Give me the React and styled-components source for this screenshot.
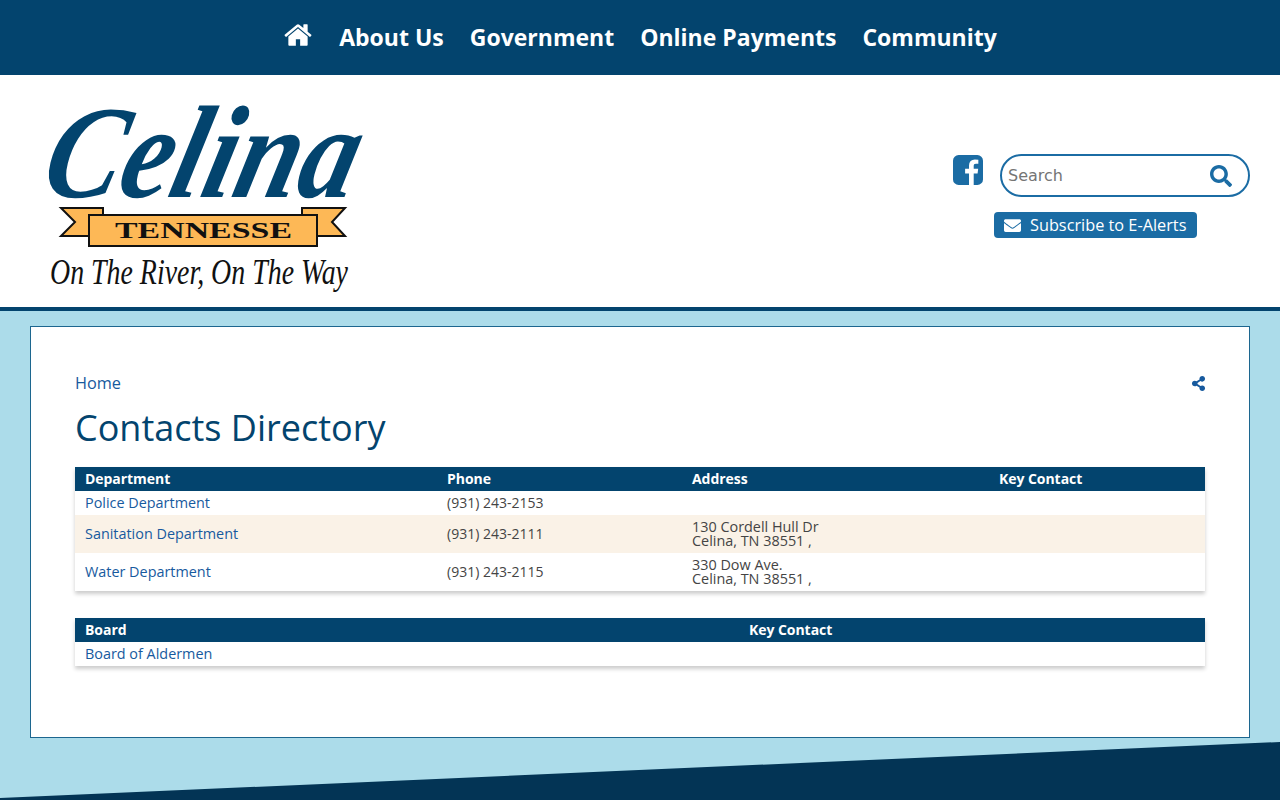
import React from 'react';
import styled, { createGlobalStyle } from 'styled-components';
import { FaSearch, FaEnvelope, FaShareAlt } from 'react-icons/fa';

const GlobalStyle = createGlobalStyle`
    html, body {
        margin: 0;
        padding: 0;
    }

    body {
        background: #acdcea;
        font-family: "Open Sans", "Liberation Sans", sans-serif;
        font-size: 14px;
        color: #444;
    }

    * {
        box-sizing: border-box;
    }
`;

const navItems = ['About Us', 'Government', 'Online Payments', 'Community'];

const departments = [
    { name: 'Police Department', phone: '(931) 243-2153', address: [] },
    { name: 'Sanitation Department', phone: '(931) 243-2111', address: ['130 Cordell Hull Dr', 'Celina, TN 38551 ,'] },
    { name: 'Water Department', phone: '(931) 243-2115', address: ['330 Dow Ave.', 'Celina, TN 38551 ,'] },
];

const HomeIcon = () => (
    <svg width="30" height="30" viewBox="0 0 1792 1792" fill="currentColor" aria-hidden="true">
        <path d="M1472 992v480q0 26-19 45t-45 19h-384v-384h-256v384h-384q-26 0-45-19t-19-45v-480q0-1 .5-3t.5-3l575-474 575 474q1 2 1 6zm223-69l-62 74q-8 9-21 11h-3q-13 0-21-7l-692-577-692 577q-12 8-24 7-13-2-21-11l-62-74q-8-10-7-23.500t11-21.500l719-599q32-26 76-26t76 26l244 204v-195q0-14 9-23t23-9h192q14 0 23 9t9 23v408l219 182q10 8 11 21.500t-7 23.500z" />
    </svg>
);

const FacebookIcon = () => (
    <svg width="30" height="30" viewBox="128 128 1536 1536" fill="currentColor" aria-hidden="true">
        <path d="M1376 128q119 0 203.500 84.500t84.500 203.500v960q0 119-84.500 203.500t-203.500 84.500h-188v-595h199l30-232h-229v-148q0-56 23.500-84t91.500-28l122-1v-207q-63-9-178-9-136 0-217.500 80t-81.500 226v171h-200v232h200v595h-532q-119 0-203.500-84.500t-84.500-203.500v-960q0-119 84.500-203.500t203.500-84.500h960z" />
    </svg>
);

const Logo = () => (
    <LogoSvg width="324" height="210" viewBox="44 98 324 210" role="img" aria-label="Celina Tennessee">
        <LogoName transform="translate(38 197) skewX(-14) scale(1 1.1)" textLength="312" lengthAdjust="spacingAndGlyphs">Celina</LogoName>
        <path d="M61 208H103V236H61L75 222Z" fill="#fdb856" stroke="#111" strokeWidth="2" />
        <path d="M345 208H302V236H345L332 222Z" fill="#fdb856" stroke="#111" strokeWidth="2" />
        <rect x="89" y="215" width="228" height="31" fill="#fdb856" stroke="#111" strokeWidth="2" />
        <LogoState x="115" y="238" textLength="177" lengthAdjust="spacingAndGlyphs">TENNESSE</LogoState>
        <LogoMotto transform="translate(50 284) scale(1 1.25)" textLength="298" lengthAdjust="spacingAndGlyphs">On The River, On The Way</LogoMotto>
    </LogoSvg>
);

const App = () => {
    return <Page>
        <GlobalStyle />
        <TopNav>
            <NavLink href="#" aria-label="Home"><HomeIcon /></NavLink>
            {navItems.map(item => <NavLink href="#" key={item}>{item}</NavLink>)}
        </TopNav>

        <Header>
            <Logo />
            <HeaderTools>
                <SearchRow>
                    <SocialLink href="#" aria-label="Facebook"><FacebookIcon /></SocialLink>
                    <SearchBox>
                        <SearchInput placeholder="Search" />
                        <FaSearch size={22} />
                    </SearchBox>
                </SearchRow>
                <SubscribeButton href="#"><FaEnvelope size={17} />Subscribe to E-Alerts</SubscribeButton>
            </HeaderTools>
        </Header>

        <Card>
            <CrumbRow>
                <TextLink href="#">Home</TextLink>
                <ShareLink href="#" aria-label="Share"><FaShareAlt size={15} /></ShareLink>
            </CrumbRow>
            <Title>Contacts Directory</Title>

            <DirectoryTable>
                <colgroup>
                    <col width="362" />
                    <col width="245" />
                    <col width="307" />
                    <col width="216" />
                </colgroup>
                <thead>
                    <tr>
                        <HeadCell>Department</HeadCell>
                        <HeadCell>Phone</HeadCell>
                        <HeadCell>Address</HeadCell>
                        <HeadCell>Key Contact</HeadCell>
                    </tr>
                </thead>
                <tbody>
                    {departments.map(dep => <Row key={dep.name}>
                        <Cell><CellLink href="#">{dep.name}</CellLink></Cell>
                        <PhoneCell>{dep.phone}</PhoneCell>
                        <Cell>{dep.address.map(line => <AddressLine key={line}>{line}</AddressLine>)}</Cell>
                        <Cell />
                    </Row>)}
                </tbody>
            </DirectoryTable>

            <DirectoryTable>
                <colgroup>
                    <col width="664" />
                    <col width="466" />
                </colgroup>
                <thead>
                    <tr>
                        <HeadCell>Board</HeadCell>
                        <HeadCell>Key Contact</HeadCell>
                    </tr>
                </thead>
                <tbody>
                    <Row>
                        <Cell><CellLink href="#">Board of Aldermen</CellLink></Cell>
                        <Cell />
                    </Row>
                </tbody>
            </DirectoryTable>
        </Card>

        <FooterWedge />
    </Page>;
};

const Page = styled.div`
    width: 100%;
    height: 800px;
    overflow: hidden;
`;

const TopNav = styled.nav`
    height: 75px;
    padding-bottom: 2px;
    background: #03446e;
    display: flex;
    justify-content: center;
    align-items: center;
    gap: 26px;
`;

const NavLink = styled.a`
    display: flex;
    align-items: center;
    color: #fff;
    font-size: 23px;
    font-weight: 700;
    text-decoration: none;
    svg {
        margin-top: -3px;
    }
`;

const Header = styled.header`
    height: 236px;
    background: #fff;
    border-bottom: 4px solid #03446e;
    padding: 23px 30px 0 44px;
    display: flex;
    justify-content: space-between;
    align-items: flex-start;
`;

const LogoSvg = styled.svg`
    display: block;
    overflow: visible;
`;

const LogoName = styled.text`
    font-family: "Liberation Serif", serif;
    font-size: 120px;
    font-weight: 700;
    font-style: italic;
    fill: #03446e;
`;

const LogoState = styled.text`
    font-family: "Liberation Serif", serif;
    font-size: 23px;
    font-weight: 700;
    fill: #111;
`;

const LogoMotto = styled.text`
    font-family: "Liberation Serif", serif;
    font-size: 29px;
    font-style: italic;
    fill: #111;
`;

const HeaderTools = styled.div`
    padding-top: 56px;
    display: flex;
    flex-direction: column;
    width: 297px;
`;

const SearchRow = styled.div`
    display: flex;
    gap: 17px;
    align-items: flex-start;
`;

const SocialLink = styled.a`
    display: block;
    height: 30px;
    margin-top: 1px;
    color: #1b6ca4;
`;

const SearchBox = styled.div`
    width: 250px;
    height: 43px;
    border: 2px solid #1b6ca4;
    border-radius: 22px;
    padding: 0 16px 0 6px;
    display: flex;
    align-items: center;
    color: #1b6ca4;
`;

const SearchInput = styled.input`
    flex: 1;
    min-width: 0;
    border: 0;
    outline: 0;
    padding: 0;
    background: transparent;
    font-family: "DejaVu Sans", sans-serif;
    font-size: 16px;
`;

const SubscribeButton = styled.a`
    align-self: flex-start;
    margin: 15px 0 0 41px;
    width: 203px;
    height: 26px;
    border-radius: 4px;
    background: #1b6ca4;
    color: #fff;
    font-size: 16.3px;
    text-decoration: none;
    white-space: nowrap;
    padding-left: 10px;
    display: flex;
    align-items: center;
    gap: 9px;
`;

const Card = styled.main`
    margin: 15px 30px 0;
    height: 412px;
    background: #fff;
    border: 1px solid #1c668f;
    padding: 45px 44px 0;
`;

const CrumbRow = styled.div`
    height: 22px;
    display: flex;
    justify-content: space-between;
    align-items: center;
`;

const TextLink = styled.a`
    display: flex;
    color: #175a9e;
    font-size: 16.3px;
    text-decoration: none;
`;

const ShareLink = styled(TextLink)`
    margin-right: -1px;
`;

const Title = styled.h1`
    margin: 9px 0 14px;
    height: 50px;
    color: #03446e;
    font-size: 36px;
    font-weight: 400;
    line-height: 50px;
`;

const DirectoryTable = styled.table`
    width: 100%;
    table-layout: fixed;
    border-collapse: collapse;
    margin-bottom: 27px;
    background: #fff;
    box-shadow: 0 3px 4px rgba(0, 0, 0, 0.2);
`;

const HeadCell = styled.th`
    height: 24px;
    padding: 0 10px 1px;
    background: #03446e;
    color: #fff;
    font-size: 14px;
    font-weight: 700;
    letter-spacing: -0.05px;
    text-align: left;
`;

const Row = styled.tr`
    &:nth-child(even) {
        background: #faf2e7;
    }
`;

const Cell = styled.td`
    height: 24px;
    padding: 0 10px;
    font-size: 14.4px;
    line-height: 14px;
`;

const PhoneCell = styled(Cell)`
    font-size: 14px;
`;

const CellLink = styled.a`
    color: #175a9e;
    text-decoration: none;
`;

const AddressLine = styled.div`
    &:first-child {
        margin-top: 5px;
    }
    &:last-child {
        margin-bottom: 5px;
    }
`;

const FooterWedge = styled.footer`
    height: 58px;
    margin-top: 4px;
    background: #033455;
    clip-path: polygon(0 56px, 100% 0, 100% 100%, 0 100%);
`;

export default App;
